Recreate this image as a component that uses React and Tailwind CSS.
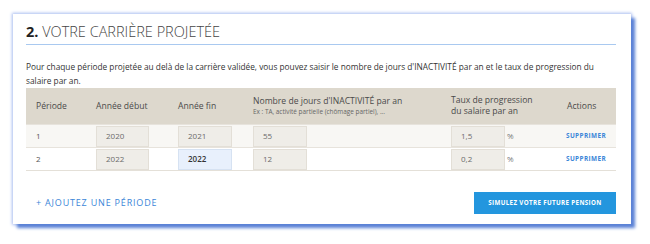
import { useState } from 'react'

const rows = [
  { id: 1, debut: '2020', fin: '2021', jours: '55', taux: '1,5' },
  { id: 2, debut: '2022', fin: '2022', jours: '12', taux: '0,2', focus: true },
]

const cols = 'grid grid-cols-[50px_92px_75px_198px_115px_60px]'
const inputCls = 'h-[21px] border border-[#e3dfd7] bg-[#efede8] pl-[9px] flex items-center text-[8px] text-[#6b6b6b]'

const App = () => {
  const [data] = useState(rows)

  return (
    <div className="w-[650px] h-[244px] bg-white pt-[14px] pl-[13px] font-['Open_Sans',sans-serif]">
      <div className="w-[618px] h-[210px] bg-white px-[13px] pt-[8px] shadow-[4px_4px_3px_0_#5b82d6,0_0_3px_1px_#a9bdf0]">
        <h2 className="text-[14.5px] leading-[20px] font-light text-[#444] pb-[2px] border-b border-[#a9c9f0] w-[590px]">
          <span className="font-bold text-[#222]">2.</span> VOTRE CARRIÈRE PROJETÉE
        </h2>

        <p className="mt-[15px] text-[8.3px] leading-[14px] text-[#333] w-[590px]">
          Pour chaque période projetée au delà de la carrière validée, vous pouvez saisir le nombre de jours d'INACTIVITÉ par an et le taux de progression du salaire par an.
        </p>

        <div className="w-[590px] border-b border-[#e4e0d8]">
          <div className={`${cols} h-[36px] bg-[#ddd8cd] items-center text-[8.6px] text-[#4a4a4a] font-medium`}>
            <div className="pl-[10px]">Période</div>
            <div className="pl-[20px]">Année début</div>
            <div className="pl-[10px]">Année fin</div>
            <div className="pl-[10px]">
              <div className="leading-[11px]">Nombre de jours d'INACTIVITÉ par an</div>
              <div className="text-[6.4px] leading-[9px] font-normal text-[#666]">Ex : TA, activité partielle (chômage partiel), ...</div>
            </div>
            <div className="pl-[10px] leading-[11px]">
              Taux de progression
              <br />
              du salaire par an
            </div>
            <div className="pl-[11px]">Actions</div>
          </div>

          {data.map((r, i) => (
            <div
              key={r.id}
              className={`${cols} h-[23px] items-center border-t border-[#e7e3dc] ${i === 0 ? 'bg-[#f8f7f4]' : 'bg-white'}`}
            >
              <div className="pl-[10px] text-[8px] text-[#555]">{r.id}</div>
              <div className="pl-[20px]">
                <div className={`${inputCls} w-[53px]`}>{r.debut}</div>
              </div>
              <div className="pl-[10px]">
                {r.focus ? (
                  <div className="h-[21px] w-[54px] border border-[#d6e2f2] bg-[#e8f0fc] pl-[9px] flex items-center text-[8px] font-semibold text-[#333]">
                    {r.fin}
                  </div>
                ) : (
                  <div className={`${inputCls} w-[54px]`}>{r.fin}</div>
                )}
              </div>
              <div className="pl-[10px]">
                <div className={`${inputCls} w-[54px] pl-[6px]`}>{r.jours}</div>
              </div>
              <div className="pl-[10px] flex items-center">
                <div className={`${inputCls} w-[54px]`}>{r.taux}</div>
                <span className="ml-[2px] text-[8px] text-[#777]">%</span>
              </div>
              <div className="pl-[10px] text-[6.4px] font-bold tracking-[0.06em] text-[#3b86d8]">SUPPRIMER</div>
            </div>
          ))}
        </div>

        <div className="w-[590px] mt-[21px] flex items-center justify-between">
          <button className="pl-[10px] text-[9px] tracking-[0.09em] text-[#3b86d8] font-medium">+ AJOUTEZ UNE PÉRIODE</button>
          <button className="w-[142px] h-[22px] bg-[#2396de] text-white text-[6.2px] font-bold tracking-[0.06em]">
            SIMULEZ VOTRE FUTURE PENSION
          </button>
        </div>
      </div>
    </div>
  )
}

export default App
